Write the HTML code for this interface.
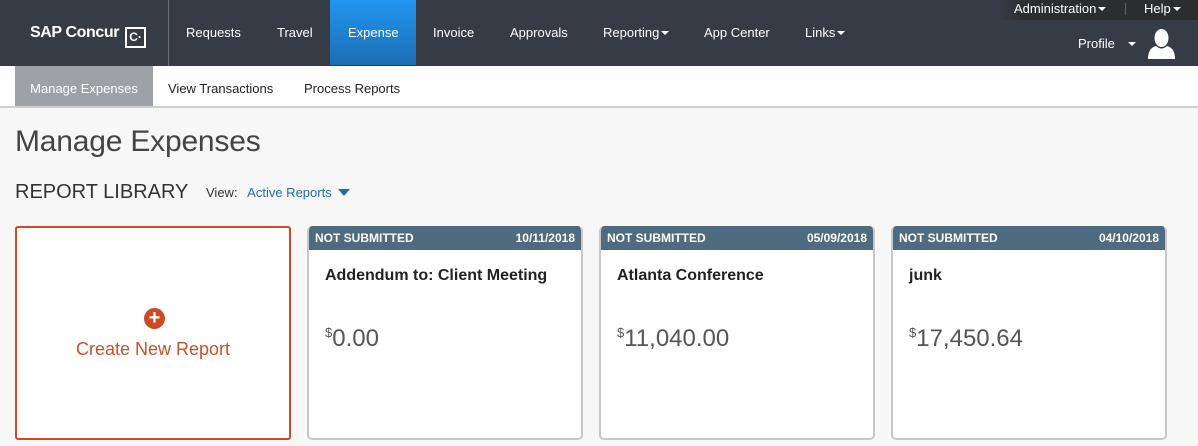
<!DOCTYPE html>
<html><head><style>
*{box-sizing:border-box;margin:0;padding:0}
body{width:1198px;height:446px;overflow:hidden;background:#f7f7f7;font-family:"Liberation Sans",Arial,sans-serif;position:relative}
.nav{position:absolute;left:0;top:0;width:1198px;height:66px;background:#363c45}
.nav .a{position:absolute;top:1px;height:66px;line-height:64px;color:#fff;font-size:13px;white-space:nowrap}
.logo{position:absolute;left:30px;top:24px;color:#fff;font-weight:bold;font-size:16px;letter-spacing:-0.4px;white-space:nowrap}
.logo .c{display:inline-block;width:21px;height:21px;border:2px solid #fff;vertical-align:-4px;margin-left:6px;font-size:12px;text-align:center;line-height:17px;letter-spacing:0}
.sep{position:absolute;left:168px;top:0;width:1px;height:66px;background:#6a7079}
.exp{position:absolute;left:330px;top:0;width:86px;height:65px;background:linear-gradient(#2196f0,#1d6db3)}
.car{display:inline-block;width:0;height:0;border-left:4px solid transparent;border-right:4px solid transparent;border-top:4px solid #fff;vertical-align:2px;margin-left:2px}
.topbar{position:absolute;right:0;top:0;width:200px;height:20px;background:linear-gradient(90deg,rgba(43,45,47,0),#2b2d2f 30px)}
.sub{position:absolute;left:0;top:66px;width:1198px;height:42px;background:#fff;border-bottom:2px solid #cfcfcf}
.sub div{position:absolute;top:0;height:40px;line-height:45px;font-size:13px;color:#222}
h1{position:absolute;left:15px;top:125px;font-weight:normal;font-size:30px;color:#444;letter-spacing:-0.2px}
.rl{position:absolute;left:15px;top:181px;font-size:20px;color:#333}
.view{position:absolute;left:206px;top:185px;font-size:13px;color:#333}
.view span{color:#1f6cb0;margin-left:6px}
.tri{display:inline-block;width:0;height:0;border-left:6px solid transparent;border-right:6px solid transparent;border-top:7px solid #1f6cb0;vertical-align:1px;margin-left:3px}
.create{position:absolute;left:15px;top:226px;width:276px;height:214px;background:#fff;border:2px solid #cd4a27;border-radius:3px}
.plus{position:absolute;left:127px;top:80px;width:21px;height:21px;border-radius:50%;background:#cd4a27;color:#fff;font-weight:bold;text-align:center;line-height:20px;font-size:20px}
.create .t{position:absolute;left:0;width:272px;top:111px;text-align:center;color:#c8502d;font-size:18px}
.card{position:absolute;top:226px;width:276px;height:214px;background:#fff;border:2px solid #c8c8c8;border-top:none;border-radius:5px;overflow:hidden}
.card .h{height:24px;background:#4f6b7f;color:#fff;font-weight:bold;font-size:12px;line-height:25px;padding:0 8px;display:flex;justify-content:space-between;margin:0 -2px}
.card .n{position:absolute;left:16px;top:41px;font-weight:bold;font-size:16px;color:#222}
.card .m{position:absolute;left:16px;top:99px;font-size:24px;color:#555}
.card .m sup{font-size:13px;vertical-align:9px}
</style></head><body>
<div class="nav">
<div class="logo">SAP Concur<span class="c">C·</span></div>
<div class="sep"></div>
<div class="exp"></div>
<div class="a" style="left:186px">Requests</div>
<div class="a" style="left:277px">Travel</div>
<div class="a" style="left:348px">Expense</div>
<div class="a" style="left:433px">Invoice</div>
<div class="a" style="left:510px">Approvals</div>
<div class="a" style="left:603px">Reporting<span class="car"></span></div>
<div class="a" style="left:704px">App Center</div>
<div class="a" style="left:805px">Links<span class="car"></span></div>
<div class="topbar"></div>
<div class="a" style="left:1014px;top:-23px">Administration<span class="car"></span></div>
<div style="position:absolute;left:1125px;top:3px;width:1px;height:12px;background:#d32f4a"></div>
<div class="a" style="left:1144px;top:-23px">Help<span class="car"></span></div>
<div class="a" style="left:1078px;top:12px">Profile <span class="car" style="margin-left:10px"></span></div>
<svg style="position:absolute;left:1148px;top:29px" width="27" height="30" viewBox="0 0 27 30"><ellipse cx="13.5" cy="9" rx="7" ry="9" fill="#fff"/><path d="M0 30 Q0 19 8 17 Q13.5 22 19 17 Q27 19 27 30Z" fill="#fff"/></svg>
</div>
<div class="sub">
<div style="left:15px;width:138px;background:#9ea1a5;color:#fff;text-align:center">Manage Expenses</div>
<div style="left:168px">View Transactions</div>
<div style="left:304px">Process Reports</div>
</div>
<h1>Manage Expenses</h1>
<div class="rl">REPORT LIBRARY</div>
<div class="view">View: <span>Active Reports <i class="tri"></i></span></div>
<div class="create"><div class="plus">+</div><div class="t">Create New Report</div></div>
<div class="card" style="left:307px"><div class="h"><span>NOT SUBMITTED</span><span>10/11/2018</span></div><div class="n">Addendum to: Client Meeting</div><div class="m"><sup>$</sup>0.00</div></div>
<div class="card" style="left:599px"><div class="h"><span>NOT SUBMITTED</span><span>05/09/2018</span></div><div class="n">Atlanta Conference</div><div class="m"><sup>$</sup>11,040.00</div></div>
<div class="card" style="left:891px"><div class="h"><span>NOT SUBMITTED</span><span>04/10/2018</span></div><div class="n">junk</div><div class="m"><sup>$</sup>17,450.64</div></div>
</body></html>
